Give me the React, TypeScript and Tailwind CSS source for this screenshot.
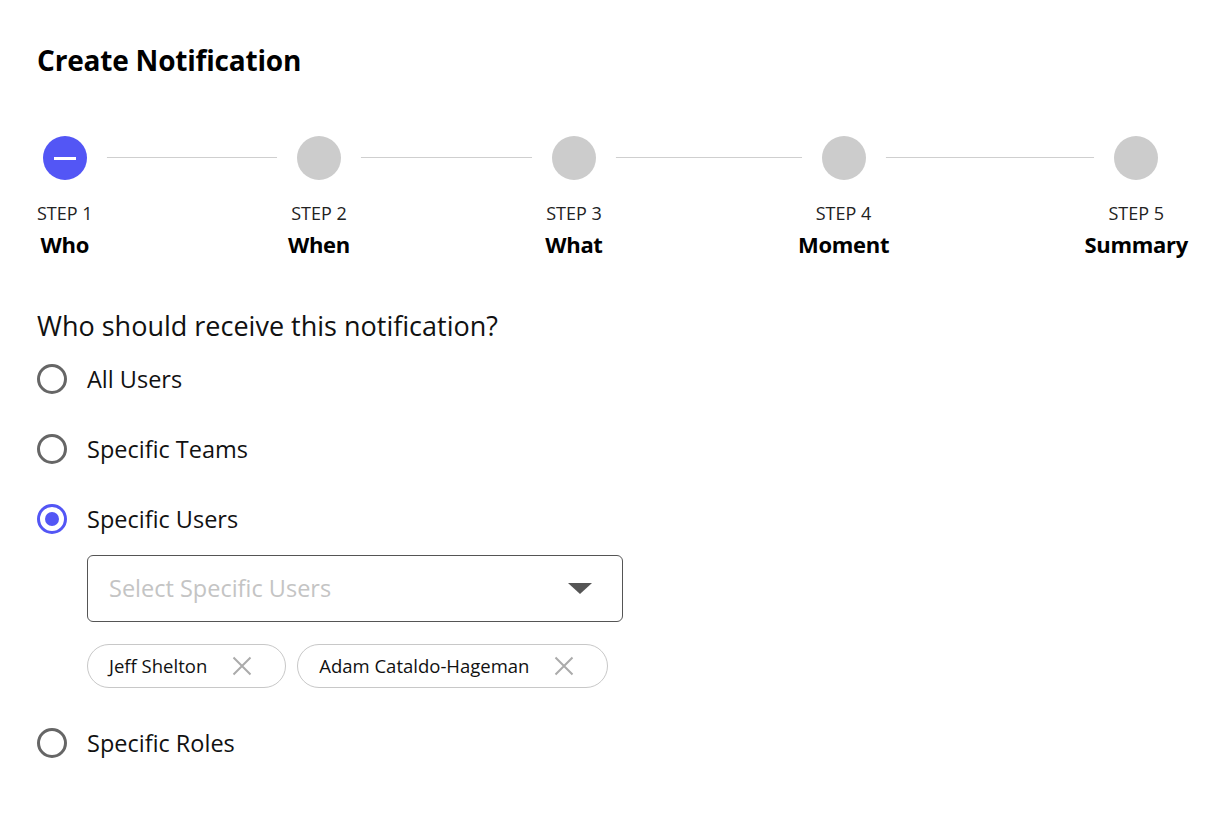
import { useState } from "react";

const steps = [
    { label: "STEP 1", title: "Who" },
    { label: "STEP 2", title: "When" },
    { label: "STEP 3", title: "What" },
    { label: "STEP 4", title: "Moment" },
    { label: "STEP 5", title: "Summary" },
];

const options = ["All Users", "Specific Teams", "Specific Users", "Specific Roles"];

const Radio = ({ checked }: { checked: boolean }) => (
    <div
        className={
            checked
                ? "w-[30px] h-[30px] rounded-full border-[3px] border-[#5356f5] flex items-center justify-center shrink-0"
                : "w-[30px] h-[30px] rounded-full border-[3px] border-[#666666] shrink-0"
        }
    >
        {checked && <div className="w-[14px] h-[14px] rounded-full bg-[#5356f5]" />}
    </div>
);

const Chip = ({ name, onRemove }: { name: string; onRemove: () => void }) => (
    <div className="h-[44px] flex items-center rounded-full border border-[#c8c8c8] pl-[21px] pr-[33px] gap-[25px]">
        <span className="text-[18.5px] text-[#111]">{name}</span>
        <button onClick={onRemove} className="w-[20px] h-[20px] flex items-center justify-center">
            <svg width="20" height="20" viewBox="0 0 20 20" fill="none">
                <path d="M1.5 1.5L18.5 18.5M18.5 1.5L1.5 18.5" stroke="#ababab" strokeWidth="2" />
            </svg>
        </button>
    </div>
);

export default function App() {
    const [selected, setSelected] = useState("Specific Users");
    const [users, setUsers] = useState(["Jeff Shelton", "Adam Cataldo-Hageman"]);

    return (
        <div className="min-h-screen bg-white text-black pt-[42px] pl-[37px] pr-[40px] font-['Open_Sans','Noto_Sans',sans-serif]">
            <h1 className="text-[28px] leading-[36px] font-bold tracking-[-0.2px]">Create Notification</h1>

            {/* Stepper */}
            <div className="relative mt-[58px] flex justify-between items-start">
                <div className="absolute top-[21px] left-[28px] right-[52px] h-px bg-[#cfcfcf]" />
                {steps.map((s, i) => (
                    <div key={s.label} className="flex flex-col items-center">
                        <div
                            className={
                                i === 0
                                    ? "relative z-10 w-[44px] h-[44px] rounded-full bg-[#5356f5] ring-[20px] ring-white flex items-center justify-center"
                                    : "relative z-10 w-[44px] h-[44px] rounded-full bg-[#cccccc] ring-[20px] ring-white"
                            }
                        >
                            {i === 0 && <div className="w-[22px] h-[3px] bg-white" />}
                        </div>
                        <div className="mt-[21px] text-[18px] leading-[24px] text-[#222]">{s.label}</div>
                        <div className="mt-[5px] text-[22px] leading-[28px] font-bold tracking-[-0.3px]">{s.title}</div>
                    </div>
                ))}
            </div>

            {/* Recipients */}
            <div className="mt-[52px] text-[27px] leading-[32px] text-[#111]">Who should receive this notification?</div>
            <div className="mt-[22px] flex flex-col gap-[40px]">
                {options.map((o) => (
                    <div key={o} className="flex flex-col">
                        <label className="flex items-center gap-[20px] cursor-pointer" onClick={() => setSelected(o)}>
                            <Radio checked={selected === o} />
                            <span className="text-[23.5px] leading-[30px] text-[#111]">{o}</span>
                        </label>
                        {o === "Specific Users" && selected === o && (
                            <div className="ml-[50px] mt-[21px]">
                                <div className="w-[536px] h-[67px] rounded-[6px] border border-[#555] flex items-center justify-between pl-[21px] pr-[30px]">
                                    <span className="text-[23.5px] text-[#c4c4c4]">Select Specific Users</span>
                                    <svg width="24" height="11" viewBox="0 0 24 11">
                                        <path d="M0 0H24L12 11Z" fill="#555" />
                                    </svg>
                                </div>
                                <div className="mt-[22px] flex gap-[11px]">
                                    {users.map((u) => (
                                        <Chip key={u} name={u} onRemove={() => setUsers(users.filter((x) => x !== u))} />
                                    ))}
                                </div>
                            </div>
                        )}
                    </div>
                ))}
            </div>
        </div>
    );
}
